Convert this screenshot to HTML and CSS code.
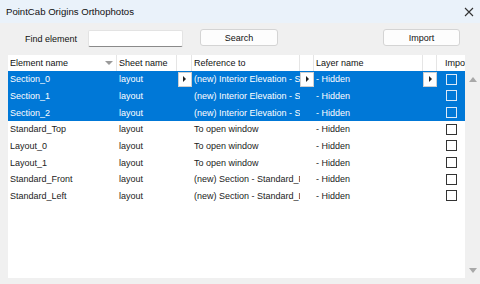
FILE: index.html
```html
<!DOCTYPE html>
<html lang="en">
<head>
	<meta charset="UTF-8">
	<title>PointCab Origins Orthophotos</title>
	<link rel="stylesheet" href="styles.css">
</head>
<body>
	<div class="window">
		<!-- title bar -->
		<div class="titlebar">
			<span class="title">PointCab Origins Orthophotos</span>
			<svg class="close" width="10" height="10" viewBox="0 0 10 10">
				<path d="M1 1 L9 9 M9 1 L1 9" stroke="#333" stroke-width="1.1" fill="none"/>
			</svg>
		</div>
		<!-- search bar -->
		<div class="toolbar">
			<span class="label">Find element</span>
			<div class="input"></div>
			<div class="btn btn_search">Search</div>
			<div class="btn btn_import">Import</div>
		</div>
		<!-- grid + scrollbar -->
		<div class="content">
			<div class="grid">
				<div class="head">Element name<span class="sort"></span></div>
				<div class="head">Sheet name</div>
				<div class="head"></div>
				<div class="head">Reference to</div>
				<div class="head"></div>
				<div class="head">Layer name</div>
				<div class="head"></div>
				<div class="head head_last">Import</div>

				<div class="cell sel">Section_0</div>
				<div class="cell sel">layout</div>
				<div class="cell sel btncell"><span class="drop"></span></div>
				<div class="cell sel"><span class="txt">(new) Interior Elevation - Section_0</span></div>
				<div class="cell sel btncell"><span class="drop"></span></div>
				<div class="cell sel">- Hidden</div>
				<div class="cell sel btncell"><span class="drop"></span></div>
				<div class="cell sel chk"><span class="box"></span></div>

				<div class="cell sel">Section_1</div>
				<div class="cell sel">layout</div>
				<div class="cell sel"></div>
				<div class="cell sel"><span class="txt">(new) Interior Elevation - Section_1</span></div>
				<div class="cell sel"></div>
				<div class="cell sel">- Hidden</div>
				<div class="cell sel"></div>
				<div class="cell sel chk"><span class="box"></span></div>

				<div class="cell sel">Section_2</div>
				<div class="cell sel">layout</div>
				<div class="cell sel"></div>
				<div class="cell sel"><span class="txt">(new) Interior Elevation - Section_2</span></div>
				<div class="cell sel"></div>
				<div class="cell sel">- Hidden</div>
				<div class="cell sel"></div>
				<div class="cell sel chk"><span class="box"></span></div>

				<div class="cell">Standard_Top</div>
				<div class="cell">layout</div>
				<div class="cell"></div>
				<div class="cell">To open window</div>
				<div class="cell"></div>
				<div class="cell">- Hidden</div>
				<div class="cell"></div>
				<div class="cell chk"><span class="box"></span></div>

				<div class="cell">Layout_0</div>
				<div class="cell">layout</div>
				<div class="cell"></div>
				<div class="cell">To open window</div>
				<div class="cell"></div>
				<div class="cell">- Hidden</div>
				<div class="cell"></div>
				<div class="cell chk"><span class="box"></span></div>

				<div class="cell">Layout_1</div>
				<div class="cell">layout</div>
				<div class="cell"></div>
				<div class="cell">To open window</div>
				<div class="cell"></div>
				<div class="cell">- Hidden</div>
				<div class="cell"></div>
				<div class="cell chk"><span class="box"></span></div>

				<div class="cell">Standard_Front</div>
				<div class="cell">layout</div>
				<div class="cell"></div>
				<div class="cell"><span class="txt">(new) Section - Standard_Front</span></div>
				<div class="cell"></div>
				<div class="cell">- Hidden</div>
				<div class="cell"></div>
				<div class="cell chk"><span class="box"></span></div>

				<div class="cell">Standard_Left</div>
				<div class="cell">layout</div>
				<div class="cell"></div>
				<div class="cell"><span class="txt">(new) Section - Standard_Left</span></div>
				<div class="cell"></div>
				<div class="cell">- Hidden</div>
				<div class="cell"></div>
				<div class="cell chk"><span class="box"></span></div>
			</div>
			<div class="scroll">
				<span class="arrow_up"></span>
				<span class="arrow_down"></span>
			</div>
		</div>
	</div>
</body>
</html>
```
FILE: styles.css
```css
* {
	padding: 0;
	margin: 0;
	box-sizing: border-box;
}
body {
	width: 480px;
	height: 284px;
	overflow: hidden;
	background-color: #f0f0f0;
	font-family: "Liberation Sans", Arial, sans-serif;
	font-size: 9px;
	color: #1a1a1a;
}
/* title bar */
.titlebar {
	height: 23px;
	background-color: #eaf2fa;
	display: flex;
	align-items: center;
	justify-content: space-between;
	padding: 0 4px 0 6px;
}
.title {
	font-size: 9.6px;
	color: #111;
}
.close {
	margin-right: 2px;
}
/* search bar */
.toolbar {
	height: 32px;
	display: flex;
	align-items: center;
	padding-left: 25px;
	padding-bottom: 1px;
}
.label {
	width: 63px;
	color: #111;
}
.input {
	width: 95px;
	height: 17px;
	background-color: #fff;
	border: 1px solid #e3e3e3;
	border-bottom: 1px solid #8a8a8a;
	border-radius: 2px;
	margin-right: 17px;
}
.btn {
	height: 17px;
	background-color: #fdfdfd;
	border: 1px solid #d4d4d4;
	border-radius: 3px;
	display: flex;
	align-items: center;
	justify-content: center;
	color: #111;
	margin-top: -2px;
}
.btn_search {
	width: 78px;
}
.btn_import {
	width: 77px;
	margin-left: auto;
	margin-right: 20px;
}
/* grid */
.content {
	display: flex;
	padding-left: 8px;
	height: 223px;
}
.grid {
	width: 457px;
	background-color: #fff;
	display: grid;
	grid-template-columns: 109px 60px 15px 108px 14px 109px 14px 28px;
	grid-template-rows: 16px repeat(8, 16.667px);
	align-content: start;
	height: 223px;
	overflow: hidden;
}
.head {
	border-right: 1px solid #e5e5e5;
	padding-left: 2px;
	display: flex;
	align-items: center;
	white-space: nowrap;
	overflow: hidden;
	position: relative;
	color: #111;
}
.head_last {
	border-right: none;
	padding-left: 8px;
}
.sort {
	position: absolute;
	right: 3px;
	top: 6px;
	width: 0;
	height: 0;
	border-left: 4px solid transparent;
	border-right: 4px solid transparent;
	border-top: 4px solid #9a9a9a;
}
.cell {
	padding-left: 2px;
	display: flex;
	align-items: center;
	white-space: nowrap;
	overflow: hidden;
	color: #222;
}
.txt {
	display: block;
	overflow: hidden;
	max-width: 100%;
}
.cell.sel {
	background-color: #0078d7;
	color: #fff;
}
.btncell {
	padding: 1px 0 1px 0;
	justify-content: center;
}
.drop {
	width: 14px;
	height: 15px;
	background-color: #fff;
	border: 1px solid #cfcfcf;
	display: flex;
	align-items: center;
	justify-content: center;
}
.drop::before {
	content: "";
	width: 0;
	height: 0;
	border-top: 3px solid transparent;
	border-bottom: 3px solid transparent;
	border-left: 3px solid #222;
}
.chk {
	padding-left: 9px;
}
.box {
	width: 11px;
	height: 11px;
	border: 1px solid #333;
	background-color: #fff;
}
.sel .box {
	border-color: #dce9f7;
	background-color: #0078d7;
}
/* scrollbar */
.scroll {
	width: 15px;
	position: relative;
}
.arrow_up,
.arrow_down {
	position: absolute;
	left: 4px;
	width: 0;
	height: 0;
	border-left: 4px solid transparent;
	border-right: 4px solid transparent;
}
.arrow_up {
	top: 22px;
	border-bottom: 5px solid #a8a8a8;
}
.arrow_down {
	bottom: 5px;
	border-top: 5px solid #a8a8a8;
}
```
